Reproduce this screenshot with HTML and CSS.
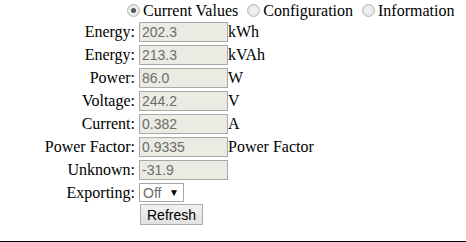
FILE: index.html
```html
<!DOCTYPE html>
<html lang="en">
<head>
    <meta charset="UTF-8">
    <title>Meter</title>
    <link rel="stylesheet" href="styles.css">
</head>
<body>
    <!-- PESTAÑAS -->
    <div class="tabs">
        <span class="tab"><span class="radio checked"></span>Current Values</span>
        <span class="tab"><span class="radio"></span>Configuration</span>
        <span class="tab"><span class="radio"></span>Information</span>
    </div>

    <!-- VALORES -->
    <div class="values">
        <div class="label">Energy:</div><div class="field">202.3</div><div class="unit">kWh</div>
        <div class="label">Energy:</div><div class="field">213.3</div><div class="unit">kVAh</div>
        <div class="label">Power:</div><div class="field">86.0</div><div class="unit">W</div>
        <div class="label">Voltage:</div><div class="field">244.2</div><div class="unit">V</div>
        <div class="label">Current:</div><div class="field">0.382</div><div class="unit">A</div>
        <div class="label">Power Factor:</div><div class="field">0.9335</div><div class="unit">Power Factor</div>
        <div class="label">Unknown:</div><div class="field">-31.9</div><div class="unit"></div>
        <div class="label">Exporting:</div><div><span class="select">Off<span class="arrow">&#9660;</span></span></div><div class="unit"></div>
        <div class="label"></div><div class="button-cell"><button class="refresh">Refresh</button></div><div class="unit"></div>
    </div>

    <div class="bottom-line"></div>
</body>
</html>
```

FILE: styles.css
```css
body {
    margin: 0;
    font-family: "Liberation Serif", "Times New Roman", serif;
    font-size: 16px;
    color: #000;
    background: #fff;
    height: 242px;
    position: relative;
    overflow: hidden;
}

/* PESTAÑAS */
.tabs {
    display: flex;
    align-items: center;
    padding-left: 127px;
    height: 21px;
    white-space: nowrap;
}

.tab {
    display: flex;
    align-items: center;
    flex-shrink: 0;
    margin-right: 9px;
    font-family: "Liberation Serif", "Times New Roman", serif;
    font-size: 16px;
}

.tab:last-child {
    margin-right: 0;
}

.radio {
    width: 13px;
    height: 13px;
    flex-shrink: 0;
    border-radius: 50%;
    border: 1px solid #b8b8b8;
    background: radial-gradient(circle, #f6f6f6 0%, #dedede 100%);
    margin-right: 3px;
    box-sizing: border-box;
    display: inline-block;
    position: relative;
}

.radio.checked::after {
    content: "";
    position: absolute;
    left: 3px;
    top: 3px;
    width: 5px;
    height: 5px;
    border-radius: 50%;
    background: #555;
}

/* VALORES */
.values {
    display: grid;
    grid-template-columns: 135px 89px auto;
    column-gap: 4px;
    row-gap: 3px;
    margin-top: 1px;
}

.label {
    text-align: right;
    height: 20px;
    line-height: 20px;
}

.unit {
    height: 20px;
    line-height: 20px;
    margin-left: -4px;
}

.field {
    width: 89px;
    height: 20px;
    box-sizing: border-box;
    border: 1px solid #a9a9a9;
    background: #ebebe4;
    color: #6d6d6d;
    font-family: "Liberation Sans", Arial, sans-serif;
    font-size: 14px;
    line-height: 18px;
    padding-left: 2px;
}

.select {
    display: inline-flex;
    align-items: center;
    justify-content: space-between;
    width: 45px;
    height: 19px;
    box-sizing: border-box;
    border: 1px solid #a9a9a9;
    background: #fff;
    color: #6d6d6d;
    font-family: "Liberation Sans", Arial, sans-serif;
    font-size: 14px;
    padding: 0 4px 0 3px;
}

.select .arrow {
    font-size: 10px;
    color: #000;
}

.button-cell {
    margin-top: -2px;
}

.refresh {
    font-family: "Liberation Sans", Arial, sans-serif;
    font-size: 14px;
    height: 21px;
    padding: 0 6px;
    margin-left: 1px;
    border: 1px solid #adadad;
    border-radius: 0;
    background: linear-gradient(#f2f2f2, #e1e1e1);
    color: #000;
}

.bottom-line {
    position: absolute;
    left: 0;
    right: 0;
    bottom: 0;
    height: 1px;
    background: #000;
}
```
